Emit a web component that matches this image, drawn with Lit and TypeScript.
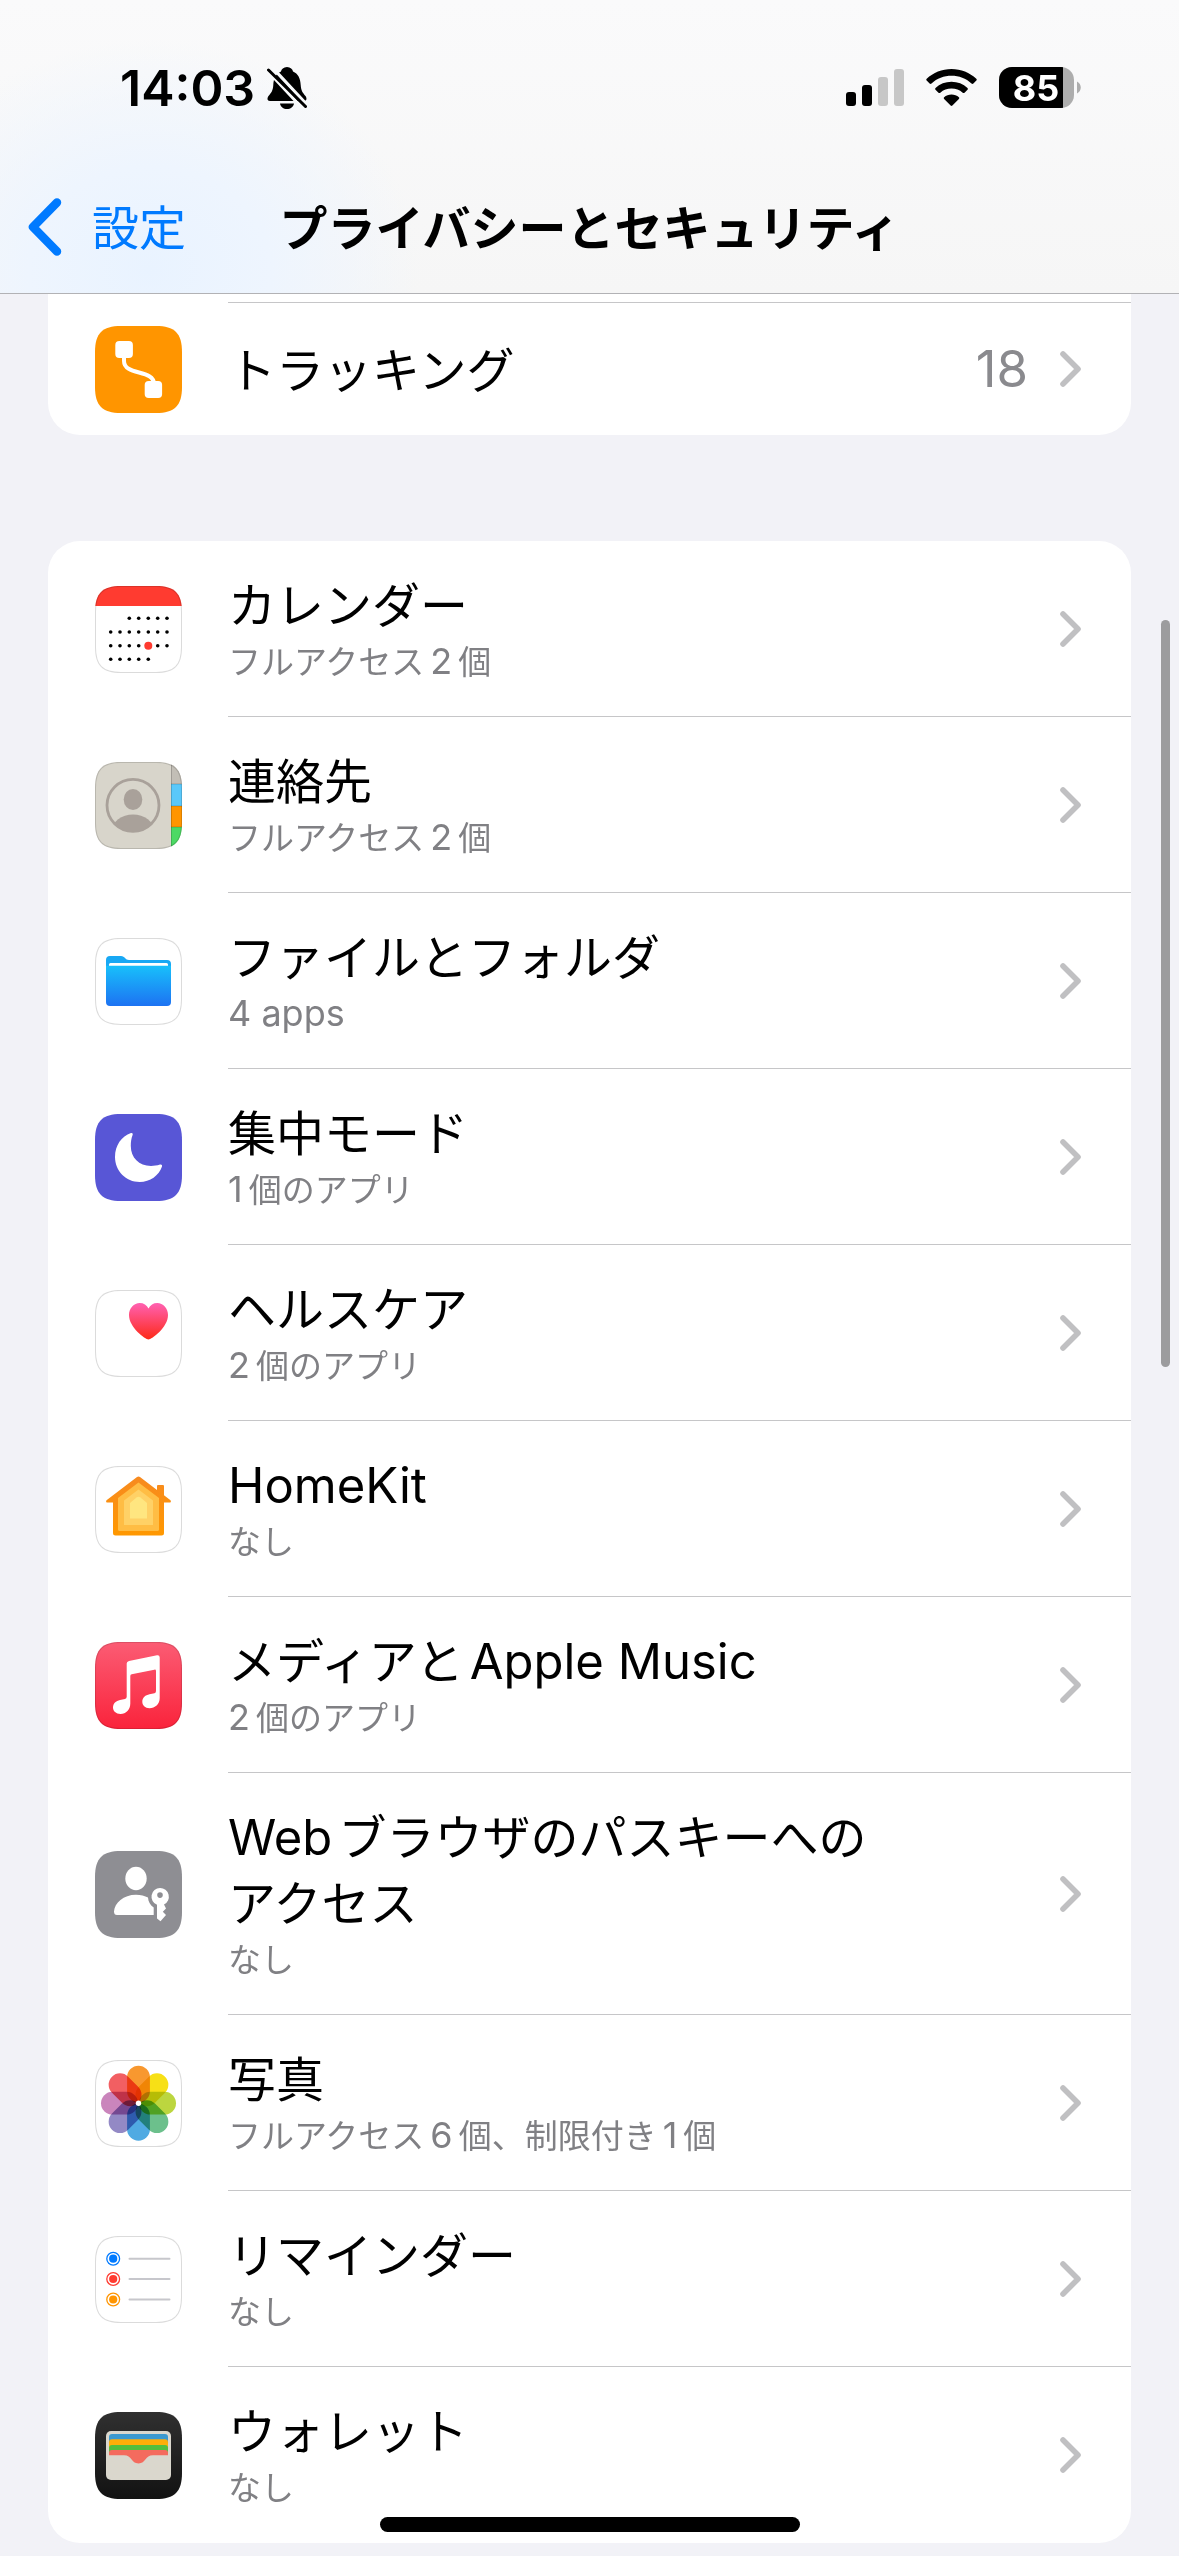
import { LitElement, html, svg, css, nothing, TemplateResult } from "lit";
import { customElement, property } from "lit/decorators.js";

// Rounded tile with continuous corners, shared by every app icon.
const TILE =
  "M26 0H61C79.7 0 87 7.3 87 26V61C87 79.7 79.7 87 61 87H26C7.3 87 0 79.7 0 61V26C0 7.3 7.3 0 26 0Z";

const whiteTile = svg`<path d=${TILE} fill="#fff"/>`;
const outline = svg`<path d=${TILE} fill="none" stroke="#000" stroke-opacity=".14" stroke-width="2" clip-path="url(#tile)"/>`;

const calendarDots = () => {
  const xs = [15.7, 25, 34.3, 43.7, 53.3, 62.7, 72];
  const rows = [
    { y: 32.3, from: 2, to: 6 },
    { y: 46, from: 0, to: 6 },
    { y: 59.7, from: 0, to: 6 },
    { y: 73.3, from: 0, to: 4 },
  ];
  return rows.map((r, i) =>
    xs.map((x, c) =>
      c < r.from || c > r.to
        ? nothing
        : i === 2 && c === 4
          ? svg`<circle cx=${x} cy=${r.y} r="4" fill="#ff3b30"/>`
          : svg`<circle cx=${x} cy=${r.y} r="1.8" fill="#000"/>`
    )
  );
};

const PETALS = ["#f8982f", "#f7e016", "#bcd63f", "#6cc08c", "#50aae2", "#9389c5", "#ca85bc", "#f25f62"];

const ICONS: Record<string, () => TemplateResult> = {
  tracking: () => svg`
    <path d=${TILE} fill="#ff9500"/>
    <path d="M29 29V35C29 50 59 43 59 58V64" fill="none" stroke="#fff" stroke-width="4"/>
    <rect x="20.3" y="15" width="17.6" height="17" rx="4" fill="#fff"/>
    <rect x="49.7" y="55" width="17.4" height="17" rx="4" fill="#fff"/>`,
  calendar: () => svg`
    ${whiteTile}
    <rect width="87" height="20" fill="#ff3b30" clip-path="url(#tile)"/>
    ${calendarDots()}${outline}`,
  contacts: () => svg`
    <g clip-path="url(#tile)">
      <rect width="87" height="87" fill="#d8d5cb"/>
      <rect x="76" width="11" height="22" fill="#c2beb6"/>
      <rect x="76" y="22" width="11" height="22" fill="#5ac8fa"/>
      <rect x="76" y="44" width="11" height="21" fill="#ff9500"/>
      <rect x="76" y="65" width="11" height="22" fill="#4cd964"/>
      <path d="M76.5 0V87M76 22H87M76 44H87M76 65H87" stroke="#000" stroke-opacity=".18" stroke-width="1"/>
    </g>
    <clipPath id="disc"><circle cx="38" cy="43.3" r="26"/></clipPath>
    <circle cx="38" cy="43.3" r="26" fill="none" stroke="#a9a19a" stroke-width="2.8"/>
    <ellipse cx="38" cy="37.5" rx="9.3" ry="10.5" fill="#a9a19a"/>
    <ellipse cx="38" cy="69" rx="21" ry="16.5" fill="#a9a19a" clip-path="url(#disc)"/>
    ${outline}`,
  files: () => svg`
    ${whiteTile}
    <linearGradient id="folder" x1="0" y1="0" x2="0" y2="1">
      <stop offset="0" stop-color="#18c0fb"/><stop offset="1" stop-color="#1d72f2"/>
    </linearGradient>
    <path d="M11 34V22Q11 18 15 18H26C30 18 30 22 34 22H72Q76 22 76 26V34Z" fill="#18a8f4"/>
    <rect x="14" y="25" width="59" height="6" rx="1.5" fill="#fff"/>
    <path d="M11 27.7H76V64Q76 68 72 68H15Q11 68 11 64Z" fill="url(#folder)"/>
    ${outline}`,
  focus: () => svg`
    <path d=${TILE} fill="#5856d6"/>
    <path fill="#fff" d="M36 19C26.5 22 20 31.5 20 43C20 57 31 68 44.7 68C55 68 64 61.5 67 52.5C67.4 51 66.5 50.2 65 50.6C62 51.7 59 52 56 52C44 52 35.8 43.5 35.8 32C35.8 28 36.3 24 37.6 21C38.1 19.6 37.4 18.7 36 19Z"/>`,
  health: () => svg`
    ${whiteTile}
    <linearGradient id="heart" x1="0" y1="0" x2="0" y2="1">
      <stop offset="0" stop-color="#ff61b2"/><stop offset="1" stop-color="#fd2a18"/>
    </linearGradient>
    <path fill="url(#heart)" d="M53.5 49.5C50.5 49.5 34 37.5 34 25C34 18 39 13 44.7 13C48.7 13 51.8 15 53.5 18.5C55.2 15 58.3 13 62.3 13C68 13 73 18 73 25C73 37.5 56.5 49.5 53.5 49.5Z"/>
    ${outline}`,
  home: () => svg`
    ${whiteTile}
    <linearGradient id="house" x1="0" y1="0" x2="0" y2="1">
      <stop offset="0" stop-color="#f78a20"/><stop offset="1" stop-color="#ff9800"/>
    </linearGradient>
    <path fill="url(#house)" d="M42 11Q43.5 10 45 11L62 24V20Q62 19 63 19H68Q69 19 69 20V29.3L75.5 34.3Q76.5 36.5 75 36.5H69V67Q69 69.5 66.5 69.5H20.5Q18 69.5 18 67V36.5H12Q10.5 36.5 11.5 34.3Z"/>
    <path fill="#ffbd44" d="M43.5 16.5L64 32V63.5Q64 65 62.5 65H24.5Q23 65 23 63.5V32Z"/>
    <path fill="#ffd166" d="M43.5 23.5L58 34.5V59H29V34.5Z"/>
    <path fill="#ffe680" d="M41.5 31.5Q43.5 30 45.5 31.5L52 37V52.5H35V37Z"/>
    ${outline}`,
  music: () => svg`
    <linearGradient id="music" x1="0" y1="0" x2="0" y2="1">
      <stop offset="0" stop-color="#fb5c74"/><stop offset="1" stop-color="#fa233b"/>
    </linearGradient>
    <path d=${TILE} fill="url(#music)"/>
    <path fill="#fff" d="M34 19L62 13.2Q64.7 12.8 64.7 15.5V56C64.7 62 60 66.3 54.5 66.3C50 66.3 47.3 63.3 47.3 59.8C47.3 55.5 50.5 53 54.5 52.2L59.5 51.2Q61 50.8 61 49V29Q61 27.3 59.3 27.7L36.7 32.2Q35.3 32.5 35.3 34V61.5C35.3 67.5 31 72 25.5 72C21 72 18 69.3 18 65.6C18 61.5 21 58.8 25 58L30 57Q31.7 56.6 31.7 54.8V21.5Q31.7 19.5 34 19Z"/>
    <path d=${TILE} fill="none" stroke="#000" stroke-opacity=".12" stroke-width="2" clip-path="url(#tile)"/>`,
  passkey: () => svg`
    <path d=${TILE} fill="#8e8e93"/>
    <ellipse cx="41" cy="27.5" rx="10.7" ry="11.7" fill="#fff"/>
    <path fill="#fff" d="M22 64Q19 64 19 60.5C19.5 52 28.5 43.7 41 43.7C45.5 43.7 50 44.8 53 46.5C53.3 50.5 55 54 58.7 56.5V64Z"/>
    <path fill="#fff" fill-rule="evenodd" d="M65 37A8.7 8.7 0 0 1 69 53.5L71 57.5L67.8 60.8L71 64L65.5 70.3L62 67.5V53.8A8.7 8.7 0 0 1 65 37ZM65 41.3A2.8 2.8 0 1 0 65 46.9A2.8 2.8 0 1 0 65 41.3Z"/>`,
  photos: () => svg`
    ${whiteTile}
    <g class="petals">
      ${PETALS.map(
        (c, i) => svg`<rect x="32.1" y="5.7" width="22.8" height="37" rx="11.4" fill=${c}
          transform=${`rotate(${i * 45} 43.5 43.2)`}/>`
      )}
    </g>
    <circle cx="43.5" cy="43.2" r="2.7" fill="#fff"/>
    ${outline}`,
  reminders: () => svg`
    ${whiteTile}
    ${[["#007aff", 22.7], ["#ff3b30", 43], ["#ff9500", 63.5]].map(
      ([c, y]) => svg`
        <circle cx="18.2" cy=${y} r="6.4" fill="none" stroke=${c} stroke-width="1.3"/>
        <circle cx="18.2" cy=${y} r="4.1" fill=${c}/>
        <path d=${`M34.5 ${y}H74.5`} stroke="#c7c7cc" stroke-width="2" stroke-linecap="round"/>`
    )}
    ${outline}`,
  wallet: () => svg`
    <linearGradient id="wallet" x1="0" y1="0" x2="0" y2="1">
      <stop offset="0" stop-color="#303030"/><stop offset="1" stop-color="#121212"/>
    </linearGradient>
    <path d=${TILE} fill="url(#wallet)"/>
    <rect x="11" y="19" width="65" height="49" rx="5" fill="#dad7cd"/>
    <rect x="14" y="22" width="59" height="12" rx="3" fill="#3b99cf"/>
    <rect x="14" y="27.3" width="59" height="12" rx="3" fill="#ffae08"/>
    <rect x="14" y="33" width="59" height="12" rx="3" fill="#55be3d"/>
    <rect x="14" y="38" width="59" height="15" rx="3" fill="#f46b5e"/>
    <path fill="#dad7cd" d="M12 43.3H29C37 43.3 36 51.5 43.5 51.5S50 43.3 58 43.3H75V63Q75 67 71 67H16Q12 67 12 63Z"/>`,
};

interface Entry {
  icon: string;
  title: string;
  detail?: string;
  value?: string;
}

const APPS: Entry[] = [
  { icon: "calendar", title: "カレンダー", detail: "フルアクセス2個" },
  { icon: "contacts", title: "連絡先", detail: "フルアクセス2個" },
  { icon: "files", title: "ファイルとフォルダ", detail: "4 apps" },
  { icon: "focus", title: "集中モード", detail: "1個のアプリ" },
  { icon: "health", title: "ヘルスケア", detail: "2個のアプリ" },
  { icon: "home", title: "HomeKit", detail: "なし" },
  { icon: "music", title: "メディアとApple Music", detail: "2個のアプリ" },
  { icon: "passkey", title: "Webブラウザのパスキーへの\nアクセス", detail: "なし" },
  { icon: "photos", title: "写真", detail: "フルアクセス6個、制限付き1個" },
  { icon: "reminders", title: "リマインダー", detail: "なし" },
  { icon: "wallet", title: "ウォレット", detail: "なし" },
];

// Latin runs are set slightly larger than the Japanese text around them,
// with a little air where the two scripts meet.
const runs = (text: string) =>
  text
    .split(/([\x20-\x7e]+)/)
    .filter(Boolean)
    .map((t, i) =>
      /^[\x20-\x7e]/.test(t) ? html`<span class=${i ? "latin inner" : "latin"}>${t}</span>` : t
    );

@customElement("settings-row")
export class SettingsRow extends LitElement {
  @property({ attribute: false }) entry!: Entry;
  @property({ type: Boolean, reflect: true }) last = false;

  static styles = css`
    :host {
      display: block;
    }
    .row {
      display: flex;
      min-height: 132px;
      padding-left: 47px;
      gap: 46px;
      color: #000;
      text-decoration: none;
    }
    .icon {
      flex: none;
      align-self: center;
      width: 87px;
      height: 87px;
    }
    .petals {
      isolation: isolate;
    }
    .petals rect {
      mix-blend-mode: multiply;
    }
    .body {
      flex: 1;
      display: flex;
      align-items: center;
      gap: 32px;
      padding: 28px 50px 27px 0;
      border-bottom: 1px solid #c6c6c8;
    }
    :host([last]) .body {
      border-color: transparent;
    }
    .text {
      flex: 1;
      padding-bottom: 4px;
    }
    .line {
      display: block;
      font-size: 48px;
      line-height: 66px;
    }
    .detail {
      display: block;
      font-size: 33px;
      line-height: 50px;
      color: #808084;
    }
    .latin {
      font-family: Inter, "Liberation Sans", sans-serif;
      line-height: 1;
      margin-right: 6px;
    }
    .inner {
      margin-left: 6px;
    }
    .line .latin {
      font-size: 49px;
    }
    .detail .latin {
      font-size: 36px;
    }
    .value {
      font-family: Inter, "Liberation Sans", sans-serif;
      font-size: 51px;
      line-height: 66px;
      color: #8a8a8e;
    }
    .chevron {
      flex: none;
      width: 21px;
      height: 36px;
    }
  `;

  render() {
    const { icon, title, detail, value } = this.entry;
    return html`<a class="row" href="#${icon}">
      <svg class="icon" viewBox="0 0 87 87" aria-hidden="true">
        <clipPath id="tile"><path d=${TILE} /></clipPath>
        ${ICONS[icon]()}
      </svg>
      <span class="body">
        <span class="text">
          ${title.split("\n").map((line) => html`<span class="line">${runs(line)}</span>`)}
          ${detail ? html`<span class="detail">${runs(detail)}</span>` : nothing}
        </span>
        ${value ? html`<span class="value">${value}</span>` : nothing}
        <svg class="chevron" viewBox="0 0 21 36" aria-hidden="true">
          <path d="M3 3L18 18L3 33" fill="none" stroke="#c0c0c2" stroke-width="5.6" stroke-linecap="round" stroke-linejoin="round" />
        </svg>
      </span>
    </a>`;
  }
}

@customElement("app-root")
export class AppRoot extends LitElement {
  static styles = css`
    :host {
      display: block;
      position: relative;
      min-height: 100vh;
      background: #f2f2f7;
      font-family: "Noto Sans CJK JP", sans-serif;
    }
    .header {
      border-bottom: 1px solid #b2b2b5;
      background:
        radial-gradient(ellipse 270px 230px at 150px 270px, #e9f3ff 0, #eef5fe 45%, rgba(246, 249, 254, 0) 100%),
        linear-gradient(#fafafb, #f6f6f6);
    }
    .status {
      display: flex;
      align-items: center;
      justify-content: space-between;
      height: 42px;
      padding: 67px 98px 0 120px;
    }
    .clock,
    .signals {
      display: flex;
      align-items: center;
    }
    .clock {
      gap: 12px;
      font: 600 50px/42px Inter, "Liberation Sans", sans-serif;
    }
    .signals {
      gap: 22px;
    }
    .status svg {
      display: block;
    }
    .battery-level {
      font: 700 36px Inter, "Liberation Sans", sans-serif;
    }
    .nav {
      display: grid;
      grid-template-columns: 1fr auto 1fr;
      align-items: center;
      padding: 83px 28px 31px;
    }
    .back {
      display: flex;
      align-items: center;
      gap: 30px;
      color: #007aff;
      text-decoration: none;
    }
    .back-label {
      padding-bottom: 4px;
      font-size: 47px;
      line-height: 66px;
    }
    h1 {
      margin: 0;
      padding-bottom: 4px;
      font-size: 48px;
      line-height: 66px;
      font-weight: 700;
    }
    .groups {
      display: flex;
      flex-direction: column;
      gap: 106px;
      padding: 0 48px 13px;
    }
    .card {
      border-radius: 32px;
      background: #fff;
      overflow: hidden;
    }
    .continued {
      border-radius: 0 0 32px 32px;
    }
    .divider {
      height: 8px;
      margin-left: 180px;
      border-bottom: 1px solid #c6c6c8;
    }
    .scroll-thumb {
      position: absolute;
      top: 620px;
      right: 9px;
      width: 9px;
      height: 747px;
      border-radius: 5px;
      background: #9c9c9e;
    }
    .home-bar {
      position: absolute;
      bottom: 24px;
      left: 50%;
      width: 420px;
      height: 15px;
      margin-left: -210px;
      border-radius: 8px;
      background: #000;
    }
  `;

  render() {
    return html`
      <header class="header">
        <div class="status">
          <div class="clock">
            <span>14:03</span>
            <svg width="40" height="42" viewBox="0 0 40 42" aria-hidden="true">
              <path d="M20 0C23.5 0 25.6 2.2 26 4.5C31 6.5 33.5 11.5 33.7 18C34 24 36 26 38.5 29C40 31 40 34 37 34H3C0 34 0 31 1.5 29C4 26 6 24 6.3 18C6.5 11.5 9 6.5 14 4.5C14.4 2.2 16.5 0 20 0ZM13 36.5H27C26.5 40 23.5 42 20 42S13.5 40 13 36.5Z" />
              <path d="M-1 2L38 44M3 -2L43 41" stroke="#f9fafb" stroke-width="3.2" />
              <path d="M1.5 3L38.5 39.5" stroke="#000" stroke-width="3" stroke-linecap="round" />
            </svg>
          </div>
          <div class="signals">
            <svg width="58" height="42" viewBox="0 0 58 42" aria-hidden="true">
              <rect x="0" y="25" width="10" height="14" rx="3" />
              <rect x="16" y="18" width="10" height="21" rx="3" />
              <rect x="32" y="10" width="10" height="29" rx="3" fill="#c7c7c7" />
              <rect x="48" y="2" width="10" height="37" rx="3" fill="#c7c7c7" />
            </svg>
            <svg width="51" height="42" viewBox="0 0 51 42" aria-hidden="true">
              <path d="M25.5 2C35 2 43.8 5.6 50.3 11.8Q51.2 12.7 50.3 13.6L47.4 16.5Q46.5 17.4 45.5 16.5C40 11.4 33 8.8 25.5 8.8S11 11.4 5.5 16.5Q4.5 17.4 3.6 16.5L.7 13.6Q-.2 12.7 .7 11.8C7.2 5.6 16 2 25.5 2Z" />
              <path d="M25.5 14.8C31.6 14.8 37.2 17 41.5 21Q42.4 21.9 41.5 22.8L38.5 25.7Q37.6 26.5 36.7 25.7C33.6 23 29.7 21.6 25.5 21.6S17.4 23 14.3 25.7Q13.4 26.5 12.5 25.7L9.5 22.8Q8.6 21.9 9.5 21C13.8 17 19.4 14.8 25.5 14.8Z" />
              <path d="M25.5 27.5C28.3 27.5 30.9 28.5 32.9 30.2Q33.7 31 32.9 31.9L26.4 38.5Q25.5 39.3 24.6 38.5L18.1 31.9Q17.3 31 18.1 30.2C20.1 28.5 22.7 27.5 25.5 27.5Z" />
            </svg>
            <svg width="82" height="42" viewBox="0 0 82 42" role="img" aria-label="85%">
              <clipPath id="cell"><rect width="75" height="41" rx="13" /></clipPath>
              <g clip-path="url(#cell)">
                <rect width="75" height="41" fill="#adadad" />
                <rect width="64" height="41" />
              </g>
              <path d="M78 14.5C83 17 83 24 78 26.5Z" fill="#adadad" />
              <text class="battery-level" x="37" y="34" text-anchor="middle" fill="#fff">85</text>
            </svg>
          </div>
        </div>
        <nav class="nav">
          <a class="back" href="#settings">
            <svg width="34" height="58" viewBox="0 0 34 58" aria-hidden="true">
              <path d="M29 4.5L5 29L29 53.5" fill="none" stroke="#007aff" stroke-width="8.5" stroke-linecap="round" stroke-linejoin="round" />
            </svg>
            <span class="back-label">設定</span>
          </a>
          <h1>プライバシーとセキュリティ</h1>
        </nav>
      </header>
      <main class="groups">
        <section class="card continued">
          <div class="divider"></div>
          <settings-row last .entry=${{ icon: "tracking", title: "トラッキング", value: "18" }}></settings-row>
        </section>
        <section class="card">
          ${APPS.map(
            (e, i) => html`<settings-row .entry=${e} ?last=${i === APPS.length - 1}></settings-row>`
          )}
        </section>
      </main>
      <div class="scroll-thumb"></div>
      <div class="home-bar"></div>
    `;
  }
}
